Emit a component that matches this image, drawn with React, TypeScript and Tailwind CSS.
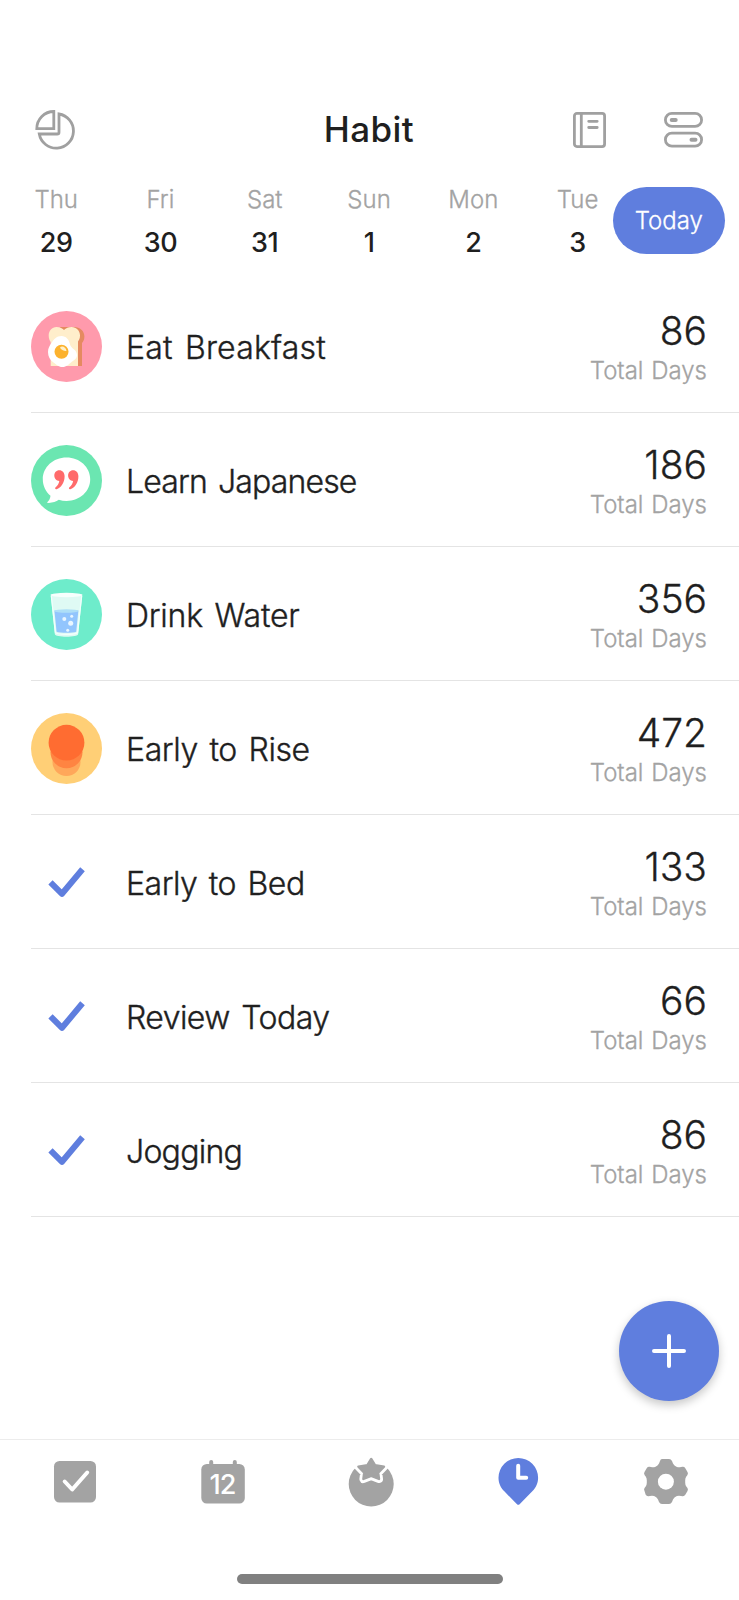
import type { ReactNode } from 'react'

interface Habit {
  name: string
  days: number
  icon: ReactNode
  tracking: string
}

const WEEK = [
  { day: 'Thu', date: 29 },
  { day: 'Fri', date: 30 },
  { day: 'Sat', date: 31 },
  { day: 'Sun', date: 1 },
  { day: 'Mon', date: 2 },
  { day: 'Tue', date: 3 },
]

function BreakfastIcon() {
  return (
    <svg width="71" height="71" viewBox="0 0 71 71">
      <circle cx="35.5" cy="35.5" r="35.5" fill="#ff9aac" />
      <path d="M29 16h14c6 0 10.400 4 10.400 9.500 0 3-1 5-2.400 6.500v23H29z" fill="#e58a60" />
      <path d="M25.500 16c3 0 5.500 1 7.500 3 2-2 4.500-3 7.500-3 5 0 8.500 4 8.500 8.500 0 3-1 4.500-2 6V55H19.700V31c-1.200-1.500-2-3.500-2-6.500 0-4.500 3.300-8.500 7.800-8.500z" fill="#ffeecb" />
      <path d="M30.500 25c4.500 0 7.500 3.500 8.500 8.500.8 4 7 5 7 10.500 0 3.500-2.500 5-5.500 7-3 2.500-5 5-9 5-4.500 0-6-2.500-9-4.500-3.500-2.300-5.500-6-5.500-10.500 0-4 1.500-6 3.500-9 2-3.500 5-7 10-7z" fill="#fff" />
      <circle cx="30.500" cy="40.700" r="7" fill="#fcb22e" />
      <path d="M29 36.500c2-2 6-.5 6.500 3.500-2 .5-5.500-1-6.500-3.500z" fill="#fff0c8" />
    </svg>
  )
}

function JapaneseIcon() {
  return (
    <svg width="71" height="71" viewBox="0 0 71 71">
      <circle cx="35.500" cy="35.500" r="35.500" fill="#6be6b1" />
      <path d="M35.500 12.500c13.300 0 23.700 9.700 23.700 21.800S48.800 56 35.500 56c-2.700 0-5.300-.4-7.700-1.200-3 2.200-7 3.400-12 3 2-1.800 3.500-4 3.700-7-4.700-4-7.700-10-7.700-16.500 0-12.100 10.400-21.800 23.700-21.800z" fill="#fff" />
      <path id="quote" d="M28.200 25.200c3.300 0 5.400 2.400 5.400 6.200 0 6-3.600 11.200-8 12.800-1.300.4-2-1-1-1.900 2-1.800 3.400-3.800 3.700-6.400-3 0-5-2.300-5-5.300 0-3 2-5.400 4.900-5.400z" fill="#ff6b6b" />
      <use href="#quote" x="13.800" />
    </svg>
  )
}

function WaterIcon() {
  return (
    <svg width="71" height="71" viewBox="0 0 71 71">
      <circle cx="35.500" cy="35.500" r="35.500" fill="#6eeccb" />
      <path d="M19.700 15.500h31.600L47.200 55c-.2 3.600-23.200 3.600-23.400 0z" fill="#dffaf4" />
      <path d="M23.400 31.500h24l-2.200 21.200c-3 1.500-16.500 1.500-19.600 0z" fill="#92c5fd" />
      <ellipse cx="35.400" cy="32" rx="12" ry="1.700" fill="#aedff7" />
      <ellipse cx="35.500" cy="16" rx="15.800" ry="2.200" fill="#f7fffd" />
      <path d="M20.300 17l4.100 36.500c2 2.500 20 2.500 22.200 0L50.700 17" fill="none" stroke="#f2fffc" strokeWidth="1.200" />
      <circle cx="33.300" cy="40" r="2" fill="#e9f6ff" />
      <circle cx="40.700" cy="37.300" r="1.500" fill="#e9f6ff" />
      <circle cx="39.700" cy="44.200" r="2.500" fill="#e9f6ff" />
      <circle cx="36.700" cy="51.300" r="1.500" fill="#e9f6ff" />
    </svg>
  )
}

function SunriseIcon() {
  return (
    <svg width="71" height="71" viewBox="0 0 71 71">
      <circle cx="35.500" cy="35.500" r="35.500" fill="#ffcf76" />
      <circle cx="35.500" cy="49" r="14" fill="#ffa75a" />
      <circle cx="35.500" cy="39.300" r="16" fill="#ff8442" />
      <circle cx="35.500" cy="29.700" r="17.900" fill="#ff6c31" />
    </svg>
  )
}

function CheckIcon() {
  return (
    <svg width="71" height="71" viewBox="0 0 71 71">
      <path d="M19.500 35.300L31 46.800l20.500-24.500" fill="none" stroke="#5f7ede" strokeWidth="6" strokeLinejoin="round" />
    </svg>
  )
}

const HABITS: Habit[] = [
  { name: 'Eat Breakfast', days: 86, icon: <BreakfastIcon />, tracking: 'tracking-[0.2px]' },
  { name: 'Learn Japanese', days: 186, icon: <JapaneseIcon />, tracking: 'tracking-[-0.85px]' },
  { name: 'Drink Water', days: 356, icon: <WaterIcon />, tracking: 'tracking-[-0.25px]' },
  { name: 'Early to Rise', days: 472, icon: <SunriseIcon />, tracking: 'tracking-[-0.4px]' },
  { name: 'Early to Bed', days: 133, icon: <CheckIcon />, tracking: 'tracking-[-0.5px]' },
  { name: 'Review Today', days: 66, icon: <CheckIcon />, tracking: 'tracking-[-0.55px]' },
  { name: 'Jogging', days: 86, icon: <CheckIcon />, tracking: 'tracking-[-0.75px]' },
]

function Header() {
  return (
    <header className="grid h-20 grid-cols-3 items-center pr-9 pl-[35px] text-[#a0a0a0]">
      <button aria-label="Statistics" className="justify-self-start">
        <svg width="40" height="40" viewBox="0 0 40 40" fill="none" stroke="currentColor" strokeWidth="2.800">
          <path d="M18.800 1.500v17.200H1.800C1.800 9 9.500 1.500 18.800 1.500z" />
          <path d="M24 4v18.200q0 1.800-1.800 1.800H4.300A17.200 17.200 0 1 0 24 4z" />
        </svg>
      </button>
      <h1 className="-mt-0.5 justify-self-center text-[35px] leading-10 font-medium tracking-[0.4px] text-[#1f1f1f]">Habit</h1>
      <div className="flex items-center gap-[58px] justify-self-end">
        <button aria-label="Journal">
          <svg width="33" height="36" viewBox="0 0 33 36" fill="none" stroke="currentColor" strokeWidth="2.800">
            <rect x="1.400" y="1.400" width="30.200" height="33.200" rx="2.500" />
            <path d="M8.300 1v34" />
            <path d="M15.700 9.300h8.500M15.700 15.500h8.500" strokeLinecap="round" />
          </svg>
        </button>
        <button aria-label="Manage habits">
          <svg width="39" height="36" viewBox="0 0 39 36" fill="none" stroke="currentColor" strokeWidth="2.800">
            <rect x="1.400" y="1.400" width="36.200" height="13" rx="6.500" />
            <rect x="1.400" y="21.200" width="36.200" height="13" rx="6.500" />
            <path d="M7.700 8h4M27.500 27.700h4" strokeWidth="4" strokeLinecap="round" />
          </svg>
        </button>
      </div>
    </header>
  )
}

function WeekStrip() {
  return (
    <div className="flex h-[109px] items-start pl-1">
      {WEEK.map(({ day, date }) => (
        <div key={day} className="flex w-[104.300px] shrink-0 flex-col items-center pt-[13px]">
          <span className="text-[24px] leading-[34px] font-light text-[#a3a3a3] [-webkit-text-stroke:0.3px]">{day}</span>
          <span className="mt-2 text-[27px] leading-9 font-medium tracking-[-0.4px] text-[#1f1f1f]">{date}</span>
        </div>
      ))}
      <button className="mt-[17px] -ml-[17px] h-[67px] w-28 shrink-0 rounded-full bg-[#5f7ede] text-[24px] font-light text-white [-webkit-text-stroke:0.3px]">
        Today
      </button>
    </div>
  )
}

function HabitRow({ name, days, icon, tracking }: Habit) {
  return (
    <li className="ml-[31px] flex h-[134px] items-center border-b border-[#e4e4e4] pt-0.5 pr-8">
      {icon}
      <span
        className={`mt-0.5 ml-6 flex-1 text-[32px] font-light text-[#1f1f1f] [-webkit-text-stroke:0.4px] [word-spacing:3px] ${tracking}`}
      >
        {name}
      </span>
      <span className="flex flex-col items-end pt-1.5 font-light [-webkit-text-stroke:0.3px]">
        <span className="text-[39px] leading-10 text-[#1f1f1f]">{days}</span>
        <span className="mt-0.5 text-[24px] leading-9 text-[#a3a3a3] [word-spacing:1px]">Total Days</span>
      </span>
    </li>
  )
}

function TabBar() {
  return (
    <nav className="grid h-[161px] grid-cols-5 content-start justify-items-center border-t border-[#ececec] pt-[15px] text-[#a3a3a3]">
      <button aria-label="Tasks">
        <svg width="52" height="54" viewBox="0 0 52 54">
          <rect x="6" y="6" width="42" height="41.500" rx="5.500" fill="currentColor" />
          <path d="M16.700 26.500l7.500 8 15-17" fill="none" stroke="#fff" strokeWidth="4" strokeLinecap="round" strokeLinejoin="round" />
        </svg>
      </button>
      <button aria-label="Calendar">
        <svg width="52" height="54" viewBox="0 0 52 54">
          <rect x="5.300" y="9" width="43.500" height="39.500" rx="5.500" fill="currentColor" />
          <path d="M15.200 12V7M38.800 12V7" stroke="currentColor" strokeWidth="4" strokeLinecap="round" />
          <text x="26.500" y="38.500" textAnchor="middle" fill="#fff" fontSize="27" fontWeight="500" letterSpacing="-0.800">12</text>
        </svg>
      </button>
      <button aria-label="Focus">
        <svg width="54" height="54" viewBox="-1 0 54 54">
          <circle cx="28.200" cy="29" r="22.500" fill="currentColor" />
          <path d="M4 0h48v13.500H4z" fill="#fff" />
          <path d="M28.200 4l3.800 6.200 9 1.500-5.800 6 .8 6.300-7.800-3-7.800 3 .8-6.300-5.800-6 9-1.500z" fill="#fff" stroke="#fff" strokeWidth="8" strokeLinejoin="round" />
          <path d="M28.200 4l3.800 6.200 9 1.500-5.800 6 .8 6.300-7.800-3-7.800 3 .8-6.300-5.800-6 9-1.500z" fill="currentColor" stroke="currentColor" strokeWidth="2.400" strokeLinejoin="round" />
        </svg>
      </button>
      <button aria-label="Habit" className="text-[#5f7ede]">
        <svg width="52" height="54" viewBox="0 0 52 54">
          <path d="M27.300 3a19.800 19.800 0 0 1 19.800 19.800c0 5.700-2.300 10-5.800 13.500L28.600 49.300q-1.300 1.100-2.600 0L13.300 36.300c-3.500-3.500-5.800-7.800-5.800-13.500A19.800 19.800 0 0 1 27.300 3z" fill="currentColor" />
          <path d="M27.200 10.800v11.900h8" fill="none" stroke="#fff" strokeWidth="4" strokeLinecap="round" strokeLinejoin="round" />
        </svg>
      </button>
      <button aria-label="Settings">
        <svg width="52" height="54" viewBox="-0.500 0 52 54">
          <path
            d="M22.500 4h7q2 0 3 2l1 2.500q1 2 3 3l1 .5q2 .7 4 0l1.500-.2q1.800-.2 2.800 1.400l2.200 3.800q1 1.600-.2 3.200l-1 1.300q-1.100 1.600-1.100 3.800v2.400q0 2.200 1.100 3.800l1 1.300q1.200 1.600.2 3.200l-2.200 3.800q-1 1.600-2.800 1.400l-1.500-.2q-2-.7-4 0l-1 .5q-2 1-3 3l-1 2.500q-1 2-3 2h-7q-2 0-3-2l-1-2.500q-1-2-3-3l-1-.5q-2-.7-4 0l-1.500.2q-1.800.2-2.800-1.400L5 36q-1-1.600.2-3.200l1-1.300q1.100-1.600 1.100-3.800v-2.400q0-2.200-1.100-3.800l-1-1.300Q4 18.600 5 17l2.200-3.800q1-1.600 2.800-1.400l1.500.2q2 .7 4 0l1-.5q2-1 3-3l1-2.500q.5-2 2-2z"
            fill="currentColor"
          />
          <circle cx="26.400" cy="26.700" r="8" fill="#fff" />
        </svg>
      </button>
    </nav>
  )
}

export default function App() {
  return (
    <div className="relative flex h-[1600px] w-[739px] flex-col overflow-hidden bg-white pt-[90px] font-[Inter,sans-serif]">
      <Header />
      <WeekStrip />
      <ul className="flex-1">
        {HABITS.map((habit) => (
          <HabitRow key={habit.name} {...habit} />
        ))}
      </ul>
      <TabBar />
      <button
        aria-label="Add habit"
        className="absolute right-5 bottom-[199px] flex size-[100px] items-center justify-center rounded-full bg-[#5f7ede] shadow-[0_4px_10px_rgba(0,0,0,0.22)]"
      >
        <svg width="34" height="34" viewBox="0 0 34 34" stroke="#fff" strokeWidth="4" strokeLinecap="round">
          <path d="M17 2v30M2 17h30" />
        </svg>
      </button>
      <div className="absolute bottom-4 left-1/2 h-[10px] w-[266px] -translate-x-1/2 rounded-full bg-[#808080]" />
    </div>
  )
}
